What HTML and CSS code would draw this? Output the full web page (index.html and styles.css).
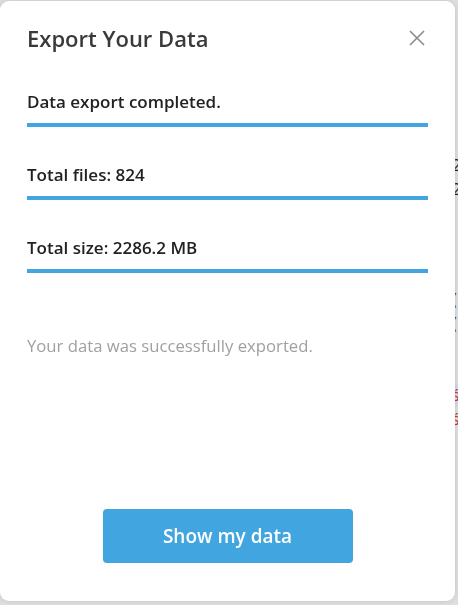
FILE: index.html
```html
<!DOCTYPE html>
<html lang="en">
<head>
<meta charset="utf-8">
<title>Export Your Data</title>
<link rel="stylesheet" href="styles.css">
</head>
<body>
<div class="page">
  <div class="page-line l1">2</div>
  <div class="page-line l2">2</div>
  <div class="page-line l3">(</div>
  <div class="page-line l4">(</div>
  <div class="page-line l5 hl">ś</div>
  <div class="page-line l6">ś</div>
</div>

<div class="dialog" role="dialog" aria-labelledby="dlg-title">
  <div class="dialog-header">
    <h1 class="dialog-title" id="dlg-title">Export Your Data</h1>
    <button class="close-btn" aria-label="Close">
      <svg width="16" height="16" viewBox="0 0 16 16"><path d="M1 1 L15 15 M15 1 L1 15" stroke="#8a8a8a" stroke-width="1.6" fill="none"/></svg>
    </button>
  </div>

  <div class="stat first">
    <div class="stat-text">Data export completed.</div>
    <div class="stat-bar"></div>
  </div>
  <div class="stat">
    <div class="stat-text">Total files: 824</div>
    <div class="stat-bar"></div>
  </div>
  <div class="stat">
    <div class="stat-text">Total size: 2286.2 MB</div>
    <div class="stat-bar"></div>
  </div>

  <p class="message">Your data was successfully exported.</p>

  <div class="actions">
    <button class="primary-btn">Show my data</button>
  </div>
</div>
</body>
</html>
```

FILE: styles.css
```css
* { box-sizing: border-box; }

html, body {
  margin: 0;
  padding: 0;
  height: 100%;
}

body {
  background: #dedede;
  font-family: "Open Sans", "Liberation Sans", sans-serif;
  overflow: hidden;
}

.page {
  padding: 153px 0 0 452px;
  font-size: 16px;
  line-height: 24px;
  color: #222;
}

.page-line { height: 24px; }
.page-line.l3 { margin-top: 86px; }
.page-line.l5 { margin-top: 48px; background: #d4d6ee; color: #c33; }
.page-line.l6 { color: #c33; }

.dialog {
  position: fixed;
  left: 0;
  top: 1px;
  width: 455px;
  height: 600px;
  background: #fff;
  border-radius: 9px;
  box-shadow: 0 0 5px rgba(0,0,0,0.12);
  padding: 22px 27px 38px 27px;
  display: flex;
  flex-direction: column;
}

.dialog-header {
  display: flex;
  justify-content: space-between;
  align-items: center;
  height: 30px;
}

.dialog-title {
  margin: 0;
  font-size: 22px;
  line-height: 30px;
  font-weight: 600;
  color: #3a3a3a;
}

.close-btn {
  border: 0;
  background: none;
  padding: 0;
  width: 16px;
  height: 16px;
  margin: 0 3px 0 0;
  display: flex;
}

.stat {
  margin-top: 36px;
  display: flex;
  flex-direction: column;
}

.stat.first { margin-top: 37px; }

.stat-text {
  font-size: 17px;
  line-height: 23px;
  font-weight: 600;
  color: #222;
}

.stat-bar {
  margin-top: 10px;
  height: 4px;
  background: #41a6e0;
}

.message {
  margin: 61px 0 0 0;
  font-size: 16.7px;
  line-height: 23px;
  color: #a0a0a0;
}

.actions {
  margin-top: auto;
  display: flex;
  justify-content: center;
}

.primary-btn {
  width: 250px;
  height: 54px;
  border: 0;
  border-radius: 4px;
  background: #41a6e0;
  color: #fff;
  font-family: "Open Sans", "Liberation Sans", sans-serif;
  font-size: 19px;
  font-weight: 600;
}
```
